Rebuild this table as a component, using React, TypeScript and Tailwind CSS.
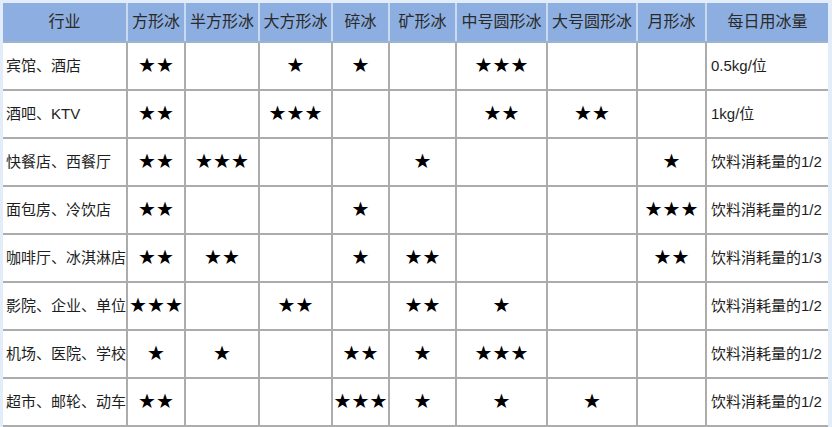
const headers = ["行业", "方形冰", "半方形冰", "大方形冰", "碎冰", "矿形冰", "中号圆形冰", "大号圆形冰", "月形冰", "每日用冰量"];

const rows: string[][] = [
  ["宾馆、酒店", "★★", "", "★", "★", "", "★★★", "", "", "0.5kg/位"],
  ["酒吧、KTV", "★★", "", "★★★", "", "", "★★", "★★", "", "1kg/位"],
  ["快餐店、西餐厅", "★★", "★★★", "", "", "★", "", "", "★", "饮料消耗量的1/2"],
  ["面包房、冷饮店", "★★", "", "", "★", "", "", "", "★★★", "饮料消耗量的1/2"],
  ["咖啡厅、冰淇淋店", "★★", "★★", "", "★", "★★", "", "", "★★", "饮料消耗量的1/3"],
  ["影院、企业、单位", "★★★", "", "★★", "", "★★", "★", "", "", "饮料消耗量的1/2"],
  ["机场、医院、学校", "★", "★", "", "★★", "★", "★★★", "", "", "饮料消耗量的1/2"],
  ["超市、邮轮、动车", "★★", "", "", "★★★", "★", "★", "★", "", "饮料消耗量的1/2"],
];

const cols = "grid grid-cols-[125px_58px_74px_73px_57px_67px_91px_90px_69px_121px]";

export default function App() {
  return (
    <div
      className="w-[832px] h-[427px] overflow-hidden bg-[#e3edf9] pt-[3px] pl-[3px]"
      style={{ fontFamily: '"Liberation Sans", "Noto Sans CJK SC", sans-serif' }}
    >
      <div className="w-[825px] bg-white">
        {/* 表头 */}
        <div className={`${cols} h-[40px] bg-[#8daee0] border-b-2 border-[#9fb3cc]`}>
          {headers.map((h, i) => (
            <div
              key={h}
              className={`flex items-center justify-center text-[16px] text-[#2a2a2a] ${
                i < headers.length - 1 ? "border-r-2 border-[#c9d9ee]" : ""
              }`}
            >
              {h}
            </div>
          ))}
        </div>

        {/* 数据 */}
        {rows.map((r) => (
          <div key={r[0]} className={`${cols} h-[48px] border-b-2 border-[#acacac]`}>
            {r.map((c, i) => {
              const first = i === 0;
              const last = i === r.length - 1;
              return (
                <div
                  key={i}
                  className={`flex items-center ${
                    first ? "pl-[3px] text-[15px] text-[#1e1e1e] whitespace-nowrap" : last ? "pl-[4px] text-[15px] text-[#1e1e1e] whitespace-nowrap" : "justify-center"
                  } ${last ? "" : "border-r-2 border-[#acacac]"}`}
                >
                  {first || last ? (
                    c
                  ) : (
                    <span
                      className="text-[20px] leading-none text-black tracking-[0px] -translate-y-[1px]"
                      style={{ fontFamily: '"DejaVu Sans", sans-serif' }}
                    >
                      {c}
                    </span>
                  )}
                </div>
              );
            })}
          </div>
        ))}
      </div>
    </div>
  );
}
